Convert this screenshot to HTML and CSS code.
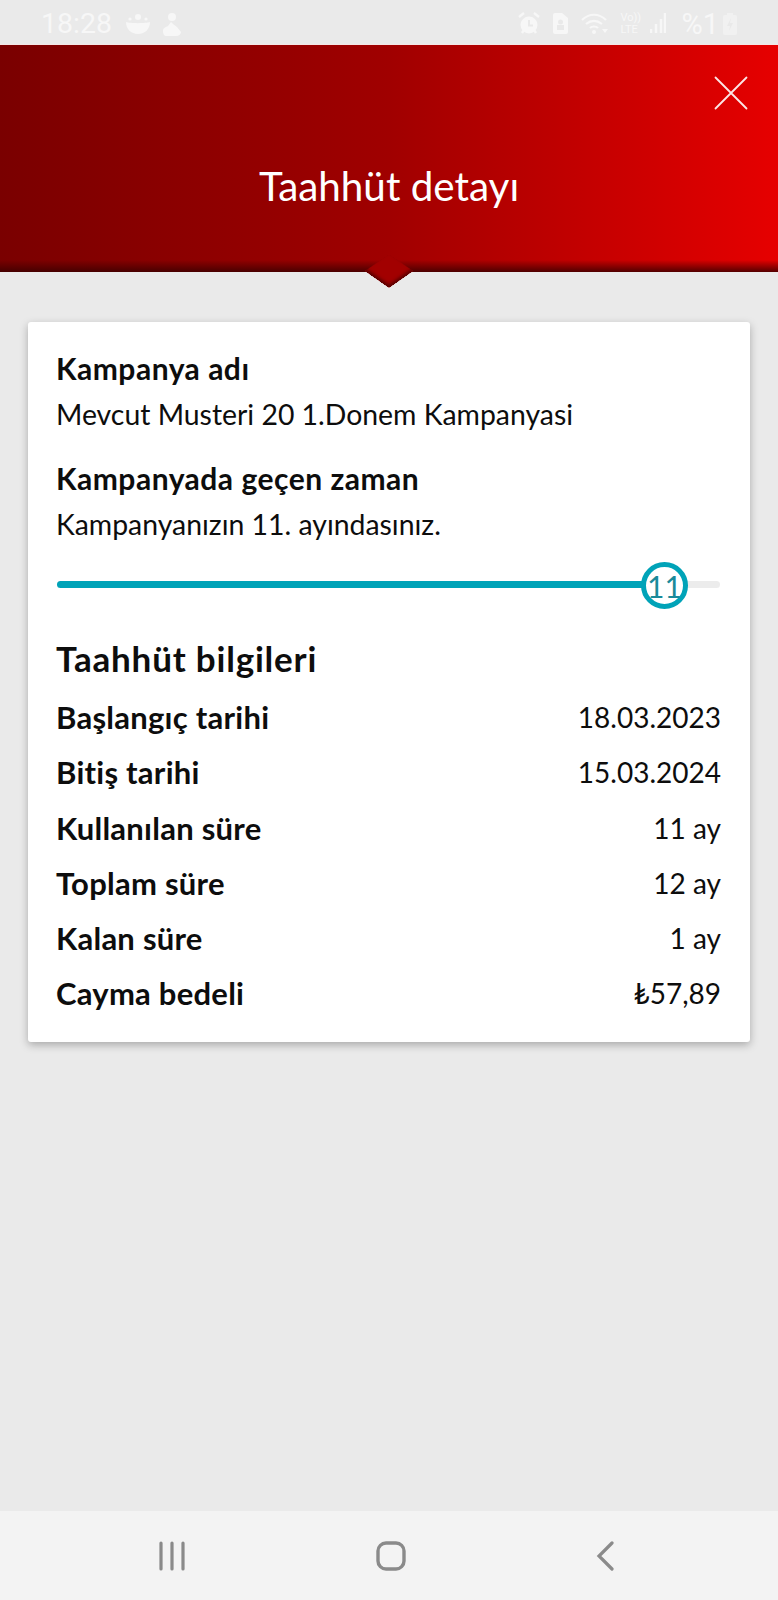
FILE: index.html
```html
<!DOCTYPE html>
<html lang="tr">
	<head>
		<meta charset="UTF-8" />
		<title>Taahhüt detayı</title>
		<link rel="stylesheet" href="styles.css">
	</head>
	<body>
		<div class="status">
			<div class="status__left">
				<span class="status__time">18:28</span>
				<svg width="24" height="22" viewBox="0 0 24 22"><path d="M0 9c4 1.500 20 1.500 24 0 0 7-5 12-12 12S0 16 0 9z" fill="#f7f7f7"/><circle cx="12" cy="4" r="3" fill="#f7f7f7"/><circle cx="4" cy="6" r="1.600" fill="#f7f7f7"/><circle cx="20" cy="6" r="1.600" fill="#f7f7f7"/></svg>
				<svg width="20" height="24" viewBox="0 0 20 24"><circle cx="10" cy="5" r="4" fill="#f7f7f7"/><path d="M1 19c0-3 3-4 5-5l3-4 2 2 4 3 4 5c0 2-2 4-5 4H5c-3 0-4-2-4-5z" fill="#f7f7f7"/></svg>
			</div>
			<div class="status__right">
				<svg width="22" height="23" viewBox="0 0 22 23"><circle cx="11" cy="13" r="8.500" fill="#f7f7f7"/><path d="M1 5l5-4M21 5l-5-4M4 21l2-3M18 21l-2-3" stroke="#f7f7f7" stroke-width="2.400"/><path d="M11 8v5.500h4" stroke="#e9e9e9" stroke-width="2" fill="none"/></svg>
				<svg width="17" height="23" viewBox="0 0 17 23"><path d="M3 1h7l6 5v14a2 2 0 0 1-2 2H3a2 2 0 0 1-2-2V3a2 2 0 0 1 2-2z" fill="#f7f7f7"/><circle cx="8.500" cy="10" r="2.500" fill="#e9e9e9"/><rect x="5" y="13" width="7" height="5" fill="#e9e9e9"/></svg>
				<svg width="27" height="23" viewBox="0 0 27 23"><path d="M1 8c7-7 17-7 24 0M5 12c5-4 11-4 16 0M9 16c2-2 6-2 8 0" fill="none" stroke="#f7f7f7" stroke-width="2.200"/><circle cx="13" cy="20" r="2" fill="#f7f7f7"/><path d="M21 17l3 4 3-4z" fill="#f7f7f7"/></svg>
				<span class="status__lte">Vo))<br>LTE</span>
				<svg class="status__signal" width="16" height="23" viewBox="0 0 16 23"><path d="M1 21v-4M6 21v-9M11 21V7M15 21V1" stroke="#f7f7f7" stroke-width="2.400"/></svg>
				<span class="status__pct">%1</span>
				<svg width="14" height="23" viewBox="0 0 14 23"><path d="M4 1h6v2h2a2 2 0 0 1 2 2v16a2 2 0 0 1-2 2H2a2 2 0 0 1-2-2V5a2 2 0 0 1 2-2h2z" fill="#f1f1f1"/><path d="M8 6l-4 8h3l-1 5 4-8H7z" fill="#e9e9e9"/></svg>
			</div>
		</div>

		<header class="hero">
			<h1 class="hero__title">Taahhüt detayı</h1>
			<button class="hero__close" aria-label="Kapat">
				<svg width="34" height="34" viewBox="0 0 34 34"><path d="M1.500 1.500l31 31M32.500 1.500l-31 31" stroke="#fff" stroke-opacity="0.9" stroke-width="1.800" stroke-linecap="round"/></svg>
			</button>
		</header>

		<main class="card">
			<div class="info">
				<div class="info__label">Kampanya adı</div>
				<div class="info__value">Mevcut Musteri 20 1.Donem Kampanyasi</div>
			</div>
			<div class="info">
				<div class="info__label">Kampanyada geçen zaman</div>
				<div class="info__value">Kampanyanızın 11. ayındasınız.</div>
			</div>

			<div class="progress">
				<div class="progress__fill"></div>
				<div class="progress__knob">11</div>
			</div>

			<h2 class="card__heading">Taahhüt bilgileri</h2>
			<div class="rows">
				<div class="row"><span class="row__key">Başlangıç tarihi</span><span>18.03.2023</span></div>
				<div class="row"><span class="row__key">Bitiş tarihi</span><span>15.03.2024</span></div>
				<div class="row"><span class="row__key">Kullanılan süre</span><span>11 ay</span></div>
				<div class="row"><span class="row__key">Toplam süre</span><span>12 ay</span></div>
				<div class="row"><span class="row__key">Kalan süre</span><span>1 ay</span></div>
				<div class="row"><span class="row__key">Cayma bedeli</span><span>₺57,89</span></div>
			</div>
		</main>

		<nav class="navbar">
			<svg width="30" height="30" viewBox="0 0 30 30"><path d="M4 2v26M15 2v26M26 2v26" stroke="#8a8a8a" stroke-width="3.200" stroke-linecap="round"/></svg>
			<svg width="32" height="32" viewBox="0 0 32 32"><rect x="3" y="3" width="26" height="26" rx="8" fill="none" stroke="#8a8a8a" stroke-width="3.400"/></svg>
			<svg width="20" height="30" viewBox="0 0 20 30"><path d="M17 2L4 15l13 13" fill="none" stroke="#8a8a8a" stroke-width="3.200" stroke-linecap="round"/></svg>
		</nav>
	</body>
</html>
```

FILE: styles.css
```css
* {
	box-sizing: border-box;
}
html,
body {
	margin: 0;
	height: 1600px;
	overflow: hidden;
}
body {
	display: flex;
	flex-direction: column;
	background-color: #eaeaea;
	font-family: Lato, "Open Sans", sans-serif;
	color: #0d0d0d;
}

/* status bar */

.status {
	height: 45px;
	padding: 3px 41px 0 41px;
	display: flex;
	align-items: center;
	justify-content: space-between;
	color: #f7f7f7;
	font-family: Roboto, sans-serif;
	border-bottom: 1px solid #f5e6e6;
}
.status__left,
.status__right {
	display: flex;
	align-items: center;
	gap: 12px;
}
.status__time {
	font-size: 28.500px;
	line-height: 34px;
	margin-right: 2px;
}
.status__pct {
	font-size: 29px;
	line-height: 34px;
	margin: 0 -8px 0 3px;
}
.status__lte {
	width: 21px;
	font-size: 11px;
	line-height: 12px;
	white-space: nowrap;
}
.status__signal {
	margin-left: -3px;
}

/* header */

.hero {
	height: 227px;
	padding-top: 54px;
	flex: none;
	display: flex;
	align-items: center;
	justify-content: center;
	position: relative;
	background:
		linear-gradient(180deg, transparent 215px, rgba(60, 0, 0, 0.85) 227px),
		linear-gradient(90deg, #7a0000, #a00000 50%, #e60000);
}
.hero::after {
	content: "";
	position: absolute;
	left: 50%;
	bottom: -16px;
	width: 34px;
	height: 34px;
	margin-left: -17px;
	background-color: #a20000;
	transform: scaleY(0.7) rotate(45deg);
	box-shadow: inset -3px -3px 4px #5a0000;
}
.hero__title {
	margin: 0;
	font-size: 40.400px;
	line-height: 50px;
	font-weight: 400;
	color: #fff;
}
.hero__close {
	position: absolute;
	top: 31px;
	right: 30px;
	padding: 0;
	border: 0;
	background: none;
	display: flex;
}

/* card */

.card {
	margin: 50px 28px 0;
	height: 720px;
	padding: 30px 29px 30px 28px;
	background-color: #fff;
	border-radius: 3px;
	box-shadow: 0 3px 8px rgba(0, 0, 0, 0.28);
}
.info {
	margin-bottom: 31px;
}
.info__label {
	font-size: 30px;
	line-height: 32px;
	font-weight: 700;
	letter-spacing: 0.5px;
}
.info__value {
	font-size: 28.400px;
	line-height: 34px;
	margin-top: 13px;
}
.progress {
	height: 7px;
	margin: 40px 1px 0;
	position: relative;
	background-color: #ececec;
	border-radius: 4px;
}
.progress__fill {
	width: 92%;
	height: 100%;
	background-color: #00a3b8;
	border-radius: 4px;
}
.progress__knob {
	position: absolute;
	top: -19px;
	left: 584px;
	width: 47px;
	height: 47px;
	display: flex;
	align-items: center;
	justify-content: center;
	border: 5px solid #00a3b8;
	border-radius: 50%;
	background-color: #fff;
	color: #1a8a9a;
	font-size: 30px;
}
.card__heading {
	margin: 49px 0 21px;
	font-size: 35px;
	line-height: 42px;
	font-weight: 700;
	letter-spacing: 0.8px;
}
.rows {
	display: flex;
	flex-direction: column;
	gap: 21.300px;
}
.row {
	display: flex;
	justify-content: space-between;
	font-size: 28px;
	line-height: 34px;
}
.row__key {
	font-size: 31px;
	font-weight: 700;
	letter-spacing: 0.25px;
}

/* android nav */

.navbar {
	margin-top: auto;
	height: 89px;
	padding: 0 163px 0 157px;
	display: flex;
	align-items: center;
	justify-content: space-between;
	background-color: #f3f3f3;
}
```
